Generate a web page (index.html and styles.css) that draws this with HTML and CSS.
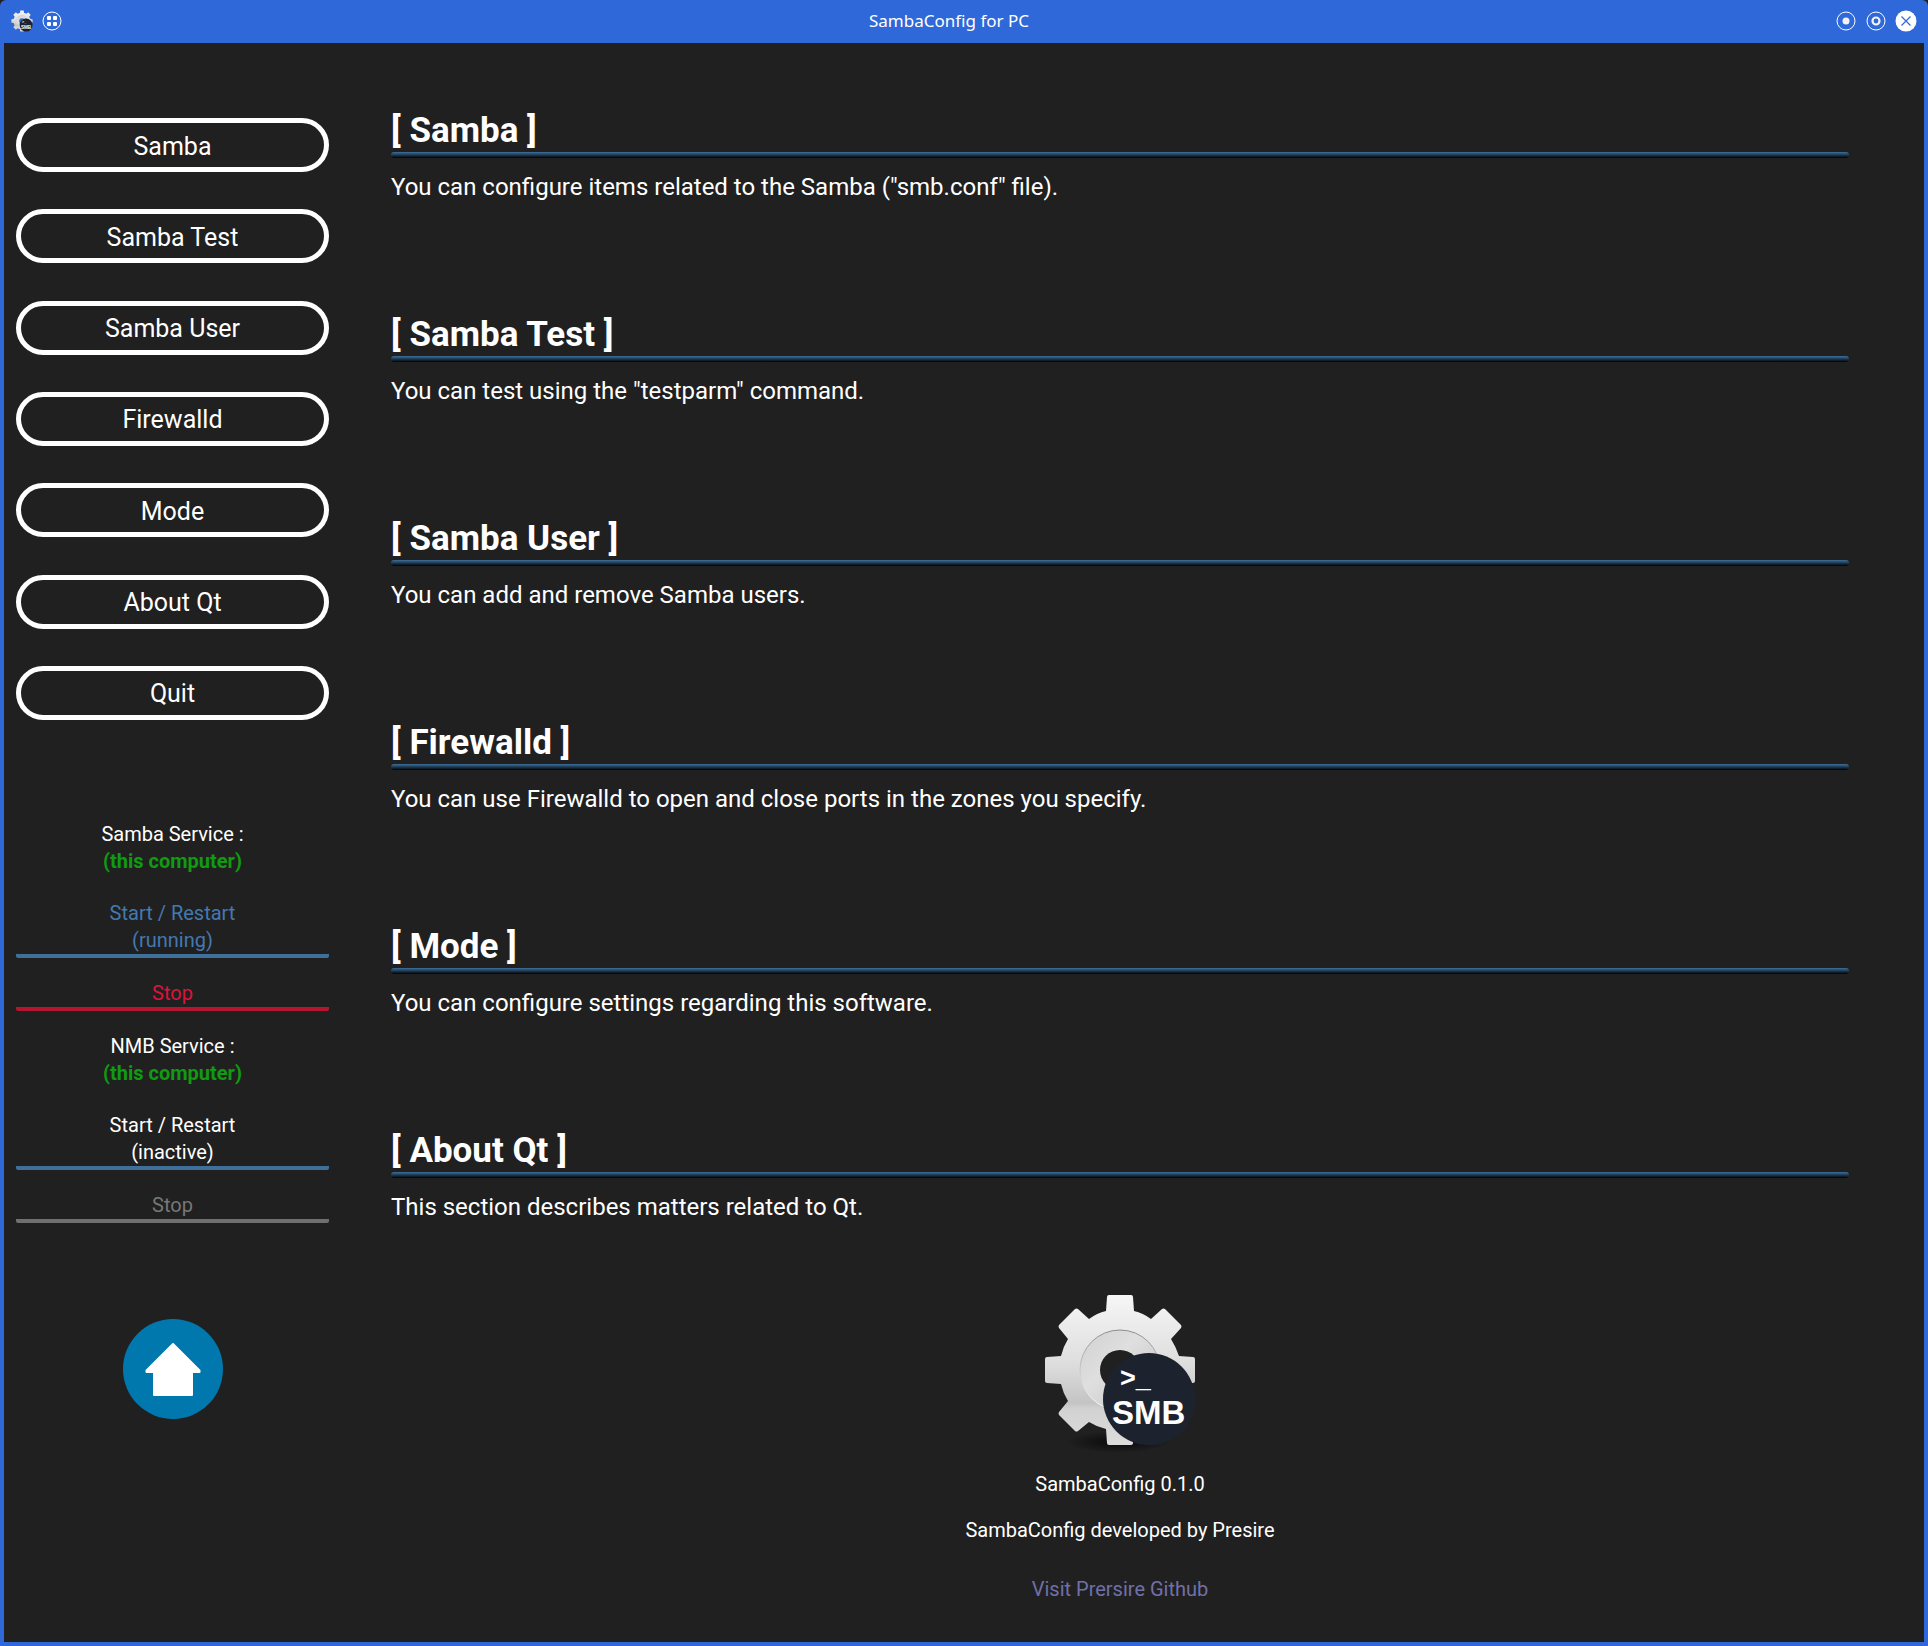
FILE: index.html
```html
<!DOCTYPE html>
<html lang="en">
<head>
<meta charset="utf-8">
<title>SambaConfig for PC</title>
<link rel="stylesheet" href="styles.css">
</head>
<body>
<svg class="defs" aria-hidden="true">
  <defs>
    <linearGradient id="metal" x1="0" y1="0" x2="0" y2="1">
      <stop offset="0" stop-color="#f6f6f6"/>
      <stop offset="0.45" stop-color="#dedede"/>
      <stop offset="0.72" stop-color="#c4c4c4"/>
      <stop offset="0.76" stop-color="#d2d2d2"/>
      <stop offset="1" stop-color="#dcdcdc"/>
    </linearGradient>
    <linearGradient id="ring" x1="0" y1="0" x2="0" y2="1">
      <stop offset="0" stop-color="#8c8c8c"/>
      <stop offset="0.5" stop-color="#c8c8c8"/>
      <stop offset="1" stop-color="#ffffff"/>
    </linearGradient>
    <linearGradient id="hub" x1="0" y1="0" x2="1" y2="1">
      <stop offset="0" stop-color="#d0d0d0"/>
      <stop offset="0.4" stop-color="#dfdfdf"/>
      <stop offset="1" stop-color="#c0c0c0"/>
    </linearGradient>
    <radialGradient id="shade">
      <stop offset="0" stop-color="#000" stop-opacity="0.7"/>
      <stop offset="1" stop-color="#000" stop-opacity="0"/>
    </radialGradient>
    <mask id="bore" maskUnits="userSpaceOnUse" x="-80" y="-80" width="160" height="160">
      <rect x="-80" y="-80" width="160" height="160" fill="#fff"/>
      <circle r="20" fill="#000"/>
    </mask>
    <symbol id="logo" viewBox="-78 -78 156 156">
      <g mask="url(#bore)">
        <g fill="url(#metal)">
          <path d="M-14-59L-13-73Q-13-75-11-75H11Q13-75 13-73L14-59Q23-57 31-51L42-61Q43.500-62 45-61L61-45Q62-43.500 61-42L51-31Q56-23 59-14L73-13Q75-13 75-11V11Q75 13 73 13L59 14Q57 23 51 31L61 42Q62 43.500 61 45L45 61Q43.500 62 42 61L31 52Q23 57 14 59L13 73Q13 75 11 75H-11Q-13 75-13 73L-14 59Q-23 57-31 52L-42 61Q-43.500 62-45 61L-61 45Q-62 43.500-61 42L-52 31Q-57 23-59 14L-73 13Q-75 13-75 11V-11Q-75-13-73-13L-59-14Q-57-23-52-31L-61-42Q-62-43.500-61-45L-45-61Q-43.500-62-42-61L-31-51Q-23-57-14-59Z"/>
        </g>
        <circle r="40" fill="url(#hub)" stroke="url(#ring)" stroke-width="1"/>
      </g>
      <circle cx="29" cy="29" r="46" fill="#1d232e"/>
      <text class="logo-prompt" x="0" y="17">&gt;_</text>
      <text class="logo-name" x="-8" y="54">SMB</text>
    </symbol>
  </defs>
</svg>
<div class="window">
  <header class="titlebar">
    <svg class="app-icon" viewBox="0 0 22 22" aria-hidden="true"><use href="#logo" width="22" height="22"/></svg>
    <button class="win-button" type="button" aria-label="Keep on all desktops">
      <svg viewBox="0 0 22 22"><circle class="outline" cx="11" cy="11" r="9"/><g fill="#fff"><rect x="6" y="6" width="4" height="4" rx="1"/><rect x="12" y="6" width="4" height="4" rx="1"/><rect x="6" y="12" width="4" height="4" rx="1"/><rect x="12" y="12" width="4" height="4" rx="1"/></g></svg>
    </button>
    <h1 class="window-title">SambaConfig for PC</h1>
    <button class="win-button" type="button" aria-label="Minimize">
      <svg viewBox="0 0 22 22"><circle class="outline" cx="11" cy="11" r="9"/><circle cx="11" cy="11" r="3.500" fill="#f2f2f2"/></svg>
    </button>
    <button class="win-button" type="button" aria-label="Maximize">
      <svg viewBox="0 0 22 22"><circle class="outline" cx="11" cy="11" r="9"/><circle cx="11" cy="11" r="3.500" fill="none" stroke="#f2f2f2" stroke-width="2.200"/></svg>
    </button>
    <button class="win-button" type="button" aria-label="Close">
      <svg viewBox="0 0 22 22"><circle cx="11" cy="11" r="10.500" fill="#fff"/><path d="M6.500 6.500l9 9M15.500 6.500l-9 9" stroke="#2f68d8" stroke-width="1.200"/></svg>
    </button>
  </header>
  <div class="client">
    <aside class="sidebar">
      <nav class="menu">
        <button class="pill" type="button">Samba</button>
        <button class="pill" type="button">Samba Test</button>
        <button class="pill" type="button">Samba User</button>
        <button class="pill" type="button">Firewalld</button>
        <button class="pill" type="button">Mode</button>
        <button class="pill" type="button">About Qt</button>
        <button class="pill" type="button">Quit</button>
      </nav>
      <section class="service">
        <p class="service-name">Samba Service :<br><strong>(this computer)</strong></p>
        <button class="action action-start running" type="button">Start / Restart<br>(running)</button>
        <button class="action action-stop" type="button">Stop</button>
      </section>
      <section class="service">
        <p class="service-name">NMB Service :<br><strong>(this computer)</strong></p>
        <button class="action action-start" type="button">Start / Restart<br>(inactive)</button>
        <button class="action action-stop" type="button" disabled>Stop</button>
      </section>
      <button class="home" type="button" aria-label="Home">
        <svg viewBox="0 0 100 100"><circle cx="50" cy="50" r="50" fill="#0078ad"/><path d="M50 25L76.500 51.500V53H69V76H31V53H23.500V51.500Z" fill="#fff" stroke="#fff" stroke-width="2" stroke-linejoin="round"/></svg>
      </button>
    </aside>
    <main class="content">
      <section class="topic"><h2>[ Samba ]</h2><p>You can configure items related to the Samba ("smb.conf" file).</p></section>
      <section class="topic"><h2>[ Samba Test ]</h2><p>You can test using the "testparm" command.</p></section>
      <section class="topic"><h2>[ Samba User ]</h2><p>You can add and remove Samba users.</p></section>
      <section class="topic"><h2>[ Firewalld ]</h2><p>You can use Firewalld to open and close ports in the zones you specify.</p></section>
      <section class="topic"><h2>[ Mode ]</h2><p>You can configure settings regarding this software.</p></section>
      <section class="topic"><h2>[ About Qt ]</h2><p>This section describes matters related to Qt.</p></section>
      <footer class="about">
        <svg class="about-logo" viewBox="0 0 156 162" role="img" aria-label="SambaConfig"><ellipse cx="76" cy="150" rx="52" ry="11" fill="url(#shade)"/><use href="#logo" width="156" height="156"/></svg>
        <p>SambaConfig 0.1.0</p>
        <p>SambaConfig developed by Presire</p>
        <a href="https://github.com/presire">Visit Prersire Github</a>
      </footer>
    </main>
  </div>
</div>
</body>
</html>
```
FILE: styles.css
```css
* {
  box-sizing: border-box;
}

body {
  margin: 0;
  background: #202020;
  color: #fff;
  font: 20px/27px Roboto, "Noto Sans", sans-serif;
}

h1, h2, p {
  margin: 0;
}

button {
  padding: 0;
  border: 0;
  background: none;
  color: inherit;
  font: inherit;
}

svg {
  display: block;
}

.defs {
  position: absolute;
  width: 0;
  height: 0;
}

.window {
  display: flex;
  flex-direction: column;
  min-height: 100vh;
  padding: 0 4px 4px;
  border-radius: 6px 6px 0 0;
  background: #2f68d8;
}

.titlebar {
  display: flex;
  align-items: center;
  gap: 8px;
  height: 43px;
  padding: 0 7px 1px;
}

.app-icon,
.win-button,
.win-button svg {
  width: 22px;
  height: 22px;
}

.outline {
  fill: none;
  stroke: #fff;
  stroke-width: 1;
}

.window-title {
  flex: 1;
  text-align: center;
  font: 17px/24px "Noto Sans", sans-serif;
}

.logo-prompt,
.logo-name {
  fill: #fff;
  font-family: "Liberation Sans", Arial, sans-serif;
  font-weight: bold;
}

.logo-prompt {
  font-size: 27px;
}

.logo-name {
  font-size: 33px;
}

.client {
  flex: 1;
  display: grid;
  grid-template-columns: 337px 1fr;
  background: #202020;
}

.sidebar {
  padding: 75px 12px 0;
  text-align: center;
}

.menu {
  display: flex;
  flex-direction: column;
  justify-content: space-between;
  min-height: 602px;
  margin-bottom: 101px;
}

.pill {
  height: 54px;
  padding-top: 2px;
  border: 5px solid #fff;
  border-radius: 27px;
  font-size: 25px;
}

.service {
  display: flex;
  flex-direction: column;
  gap: 22px;
  margin-bottom: 22px;
}

.service-name {
  padding-bottom: 3px;
}

.service-name strong {
  color: #109b10;
}

.action {
  border-bottom: 4px solid #3f7099;
  border-radius: 2px;
}

.running {
  color: #4479b0;
}

.action-stop {
  border-color: #b5152f;
  color: #dc143c;
}

.action-stop:disabled {
  border-color: #6f6f6f;
  color: #777;
}

.home {
  width: 100px;
  height: 100px;
  margin-top: 74px;
}

.content {
  padding: 67px 75px 0 50px;
}

.topic + .topic {
  margin-top: 111px;
}

.topic h2 {
  margin-bottom: 13px;
  font-size: 35px;
  line-height: 42px;
}

.topic h2::after {
  content: "";
  display: block;
  height: 6px;
  border-radius: 3px;
  background: linear-gradient(#3f709c, #000);
}

.topic p {
  font-size: 24px;
  line-height: 32px;
}

.about {
  display: flex;
  flex-direction: column;
  align-items: center;
  margin-top: 69px;
}

.about-logo {
  width: 156px;
  height: 162px;
  margin-bottom: 17px;
}

.about p {
  margin-bottom: 19px;
}

.about a {
  margin-top: 13px;
  color: #7070a8;
  text-decoration: none;
}
```
